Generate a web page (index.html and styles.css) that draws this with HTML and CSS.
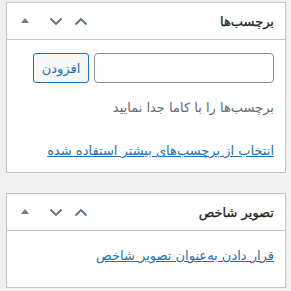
FILE: index.html
```html
<!DOCTYPE html>
<html lang="fa" dir="rtl">
<head>
  <meta charset="UTF-8">
  <title>برچسب‌ها</title>
  <link rel="stylesheet" href="styles.css">
</head>
<body>
  <div class="postbox">
    <div class="postbox-header">
      <h2 class="hndle">برچسب‌ها</h2>
      <div class="handle-actions">
        <button class="handle-btn order-higher" type="button">
          <svg viewBox="0 0 14 9" width="14" height="9"><path d="M1.5 7.5 L7 2 L12.5 7.5" /></svg>
        </button>
        <button class="handle-btn order-lower" type="button">
          <svg viewBox="0 0 14 9" width="14" height="9"><path d="M1.5 1.5 L7 7 L12.5 1.5" /></svg>
        </button>
        <button class="handle-btn toggle" type="button">
          <span class="tri"></span>
        </button>
      </div>
    </div>
    <div class="inside">
      <div class="tag-add">
        <input type="text" class="tag-input">
        <button class="button" type="button">افزودن</button>
      </div>
      <p class="howto">برچسب‌ها را با کاما جدا نمایید</p>
      <p class="tagcloud-link"><a href="#">انتخاب از برچسب‌های بیشتر استفاده شده</a></p>
    </div>
  </div>

  <div class="postbox">
    <div class="postbox-header">
      <h2 class="hndle">تصویر شاخص</h2>
      <div class="handle-actions">
        <button class="handle-btn order-higher" type="button">
          <svg viewBox="0 0 14 9" width="14" height="9"><path d="M1.5 7.5 L7 2 L12.5 7.5" /></svg>
        </button>
        <button class="handle-btn order-lower" type="button">
          <svg viewBox="0 0 14 9" width="14" height="9"><path d="M1.5 1.5 L7 7 L12.5 1.5" /></svg>
        </button>
        <button class="handle-btn toggle" type="button">
          <span class="tri"></span>
        </button>
      </div>
    </div>
    <div class="inside thumb">
      <p class="set-thumb"><a href="#">قرار دادن به‌عنوان تصویر شاخص</a></p>
    </div>
  </div>
</body>
</html>
```

FILE: styles.css
```css
body {
  margin: 0;
  padding: 2px 5px 0 6px;
  background: #f0f0f1;
  font-family: Tahoma, "DejaVu Sans", sans-serif;
  font-size: 13px;
  color: #3c434a;
}

.postbox {
  background: #fff;
  border: 1px solid #c3c4c7;
  margin-bottom: 20px;
}

.postbox:last-child {
  margin-bottom: 0;
}

.postbox-header {
  display: flex;
  align-items: center;
  justify-content: space-between;
  height: 36px;
  border-bottom: 1px solid #c3c4c7;
}

.hndle {
  margin: 0;
  padding: 0 11px 0 0;
  font-size: 13px;
  font-weight: normal;
  color: #1d2327;
  -webkit-text-stroke: 0.25px #1d2327;
}

.handle-actions {
  display: flex;
  height: 100%;
}

.handle-btn {
  display: flex;
  align-items: center;
  justify-content: center;
  height: 100%;
  padding: 0;
  border: 0;
  background: none;
}

.handle-btn svg path {
  fill: none;
  stroke: #646970;
  stroke-width: 1.8;
}

.order-higher {
  width: 24px;
}

.order-higher svg path {
  stroke: #50708f;
}

.order-lower {
  width: 26px;
}

.order-lower svg path {
  stroke: #7a6a5c;
}

.toggle {
  width: 36px;
}

.tri {
  width: 0;
  height: 0;
  border-left: 4px solid transparent;
  border-right: 4px solid transparent;
  border-bottom: 5px solid #787c82;
  margin-top: -1px;
}

.inside {
  padding: 13px 11px 12px 26px;
}

.tag-add {
  display: flex;
  gap: 5px;
}

.tag-input {
  width: 180px;
  height: 30px;
  box-sizing: border-box;
  margin: 0;
  border: 1px solid #8c8f94;
  border-radius: 4px;
  background: #fff;
}

.button {
  width: 56px;
  height: 30px;
  box-sizing: border-box;
  margin: 0;
  padding: 0;
  border: 1px solid #2271b1;
  border-radius: 3px;
  background: #f6f7f7;
  color: #2271b1;
  font-family: inherit;
  font-size: 13px;
}

.howto {
  margin: 15px 0 0;
  line-height: 19px;
  color: #646970;
}

.tagcloud-link {
  margin: 24px 0 0;
  line-height: 19px;
}

a {
  color: #2271b1;
  text-decoration: underline;
}

.thumb {
  padding-top: 15px;
  padding-bottom: 22px;
}

.set-thumb {
  margin: 0;
  line-height: 19px;
}
```
